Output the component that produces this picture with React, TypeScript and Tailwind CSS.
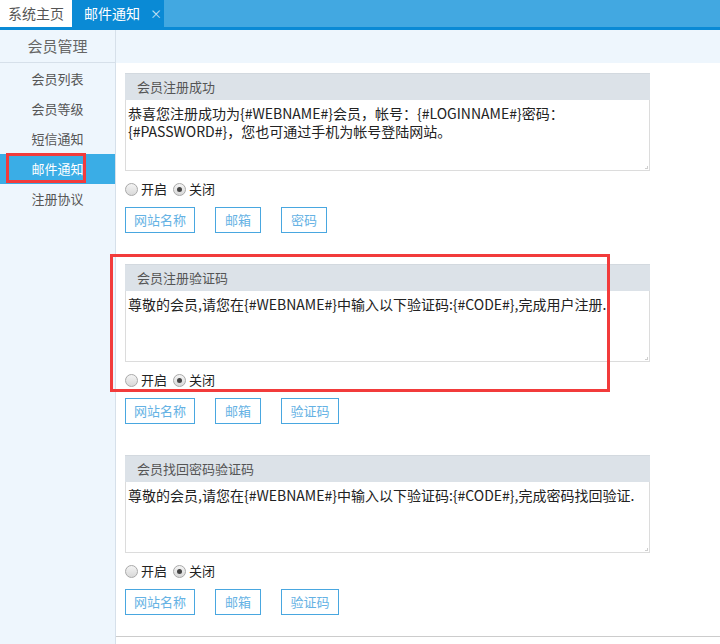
import React from "react";

const FONT = { fontFamily: '"Microsoft YaHei", "Noto Sans CJK SC", "Noto Sans", sans-serif' };

function Radio({ checked }: { checked?: boolean }) {
  return (
    <span className="inline-flex w-[13px] h-[13px] rounded-full border border-[#a9a9a9] bg-gradient-to-b from-[#f4f4f4] to-[#d9d9d9] items-center justify-center">
      {checked && <span className="block w-[5px] h-[5px] rounded-full bg-[#444]" />}
    </span>
  );
}

const BTN_W: Record<number, string> = {
  2: "w-[46px]",
  3: "w-[58px]",
  4: "w-[70px]",
};

function Section({
  title,
  body,
  buttons,
  last,
}: {
  title: string;
  body: React.ReactNode;
  buttons: string[];
  last?: boolean;
}) {
  return (
    <div className={last ? "w-[525px]" : "w-[525px] mb-[31px]"}>
      <div className="h-[27px] bg-[#dce2e8] border-t border-[#d3d9df] pl-[12px] flex items-center text-[13px] text-[#555]">
        {title}
      </div>
      <div className="relative h-[71px] border-l border-r border-b border-[#dcdcdc] px-[2px] pt-[4px] text-[14px] leading-[18px] text-[#222]">
        {body}
        <span className="absolute right-[1px] bottom-[1px] w-[3px] h-[3px] border-r border-b border-[#cfcfcf]" />
      </div>
      <div className="mt-[9px] h-[18px] flex items-center text-[13px] text-[#222]">
        <Radio />
        <span className="ml-[3px]">开启</span>
        <span className="ml-[6px] flex items-center">
          <Radio checked />
        </span>
        <span className="ml-[3px]">关闭</span>
      </div>
      <div className="mt-[9px] flex gap-[20px]">
        {buttons.map((b) => (
          <div
            key={b}
            className={
              BTN_W[b.length] +
              " h-[26px] border border-[#49a7e0] text-[13px] text-[#65b2e4] flex items-center justify-center whitespace-nowrap"
            }
          >
            {b}
          </div>
        ))}
      </div>
    </div>
  );
}

export default function App() {
  const menu = ["会员列表", "会员等级", "短信通知", "邮件通知", "注册协议"];
  return (
    <div className="relative w-[720px] h-[644px] overflow-hidden bg-white" style={FONT}>
      <div className="h-[30px] flex bg-[#42a8e1] border-b-[3px] border-[#0a8ad5]">
        <div className="w-[72px] bg-white text-[14px] text-[#555] flex items-center justify-center whitespace-nowrap">
          系统主页
        </div>
        <div className="w-[92px] bg-[#0a8ad5] text-[14px] text-white flex items-center pl-[12px] whitespace-nowrap">
          <span>邮件通知</span>
          <span className="ml-[10px] text-[12px] text-[#cfe6f6]">×</span>
        </div>
      </div>
      <div className="flex h-[614px]">
        <div className="w-[116px] shrink-0 bg-[#eef6fd] border-r border-[#d6e0ea]">
          <div className="h-[33px] border-b border-[#d6e0ea] flex items-center justify-center text-[15px] text-[#666]">
            会员管理
          </div>
          <div className="pt-[1px]">
            {menu.map((m) => (
              <div
                key={m}
                className={
                  m === "邮件通知"
                    ? "h-[30px] flex items-center justify-center text-[13px] text-white bg-[#3aade6]"
                    : "h-[30px] flex items-center justify-center text-[13px] text-[#555]"
                }
              >
                {m}
              </div>
            ))}
          </div>
        </div>
        <div className="flex-1 flex flex-col">
          <div className="h-[33px] shrink-0 bg-[#eef6fd]" />
          <div className="shrink-0 pl-[9px] pt-[10px] pb-[21px] border-b border-[#cccccc]">
            <Section
              title="会员注册成功"
              body={
                <>
                  恭喜您注册成功为{"{#WEBNAME#}"}会员，帐号：{"{#LOGINNAME#}"}密码：
                  <br />
                  {"{#PASSWORD#}"}，您也可通过手机为帐号登陆网站。
                </>
              }
              buttons={["网站名称", "邮箱", "密码"]}
            />
            <Section
              title="会员注册验证码"
              body={<>尊敬的会员,请您在{"{#WEBNAME#}"}中输入以下验证码:{"{#CODE#}"},完成用户注册.</>}
              buttons={["网站名称", "邮箱", "验证码"]}
            />
            <Section
              title="会员找回密码验证码"
              body={<>尊敬的会员,请您在{"{#WEBNAME#}"}中输入以下验证码:{"{#CODE#}"},完成密码找回验证.</>}
              buttons={["网站名称", "邮箱", "验证码"]}
              last
            />
          </div>
        </div>
      </div>
      <div className="absolute left-[6px] top-[153px] w-[80px] h-[30px] border-[3px] border-[#f23b3b]" />
      <div className="absolute left-[110px] top-[254px] w-[500px] h-[138px] border-[3px] border-[#f23b3b]" />
    </div>
  );
}
